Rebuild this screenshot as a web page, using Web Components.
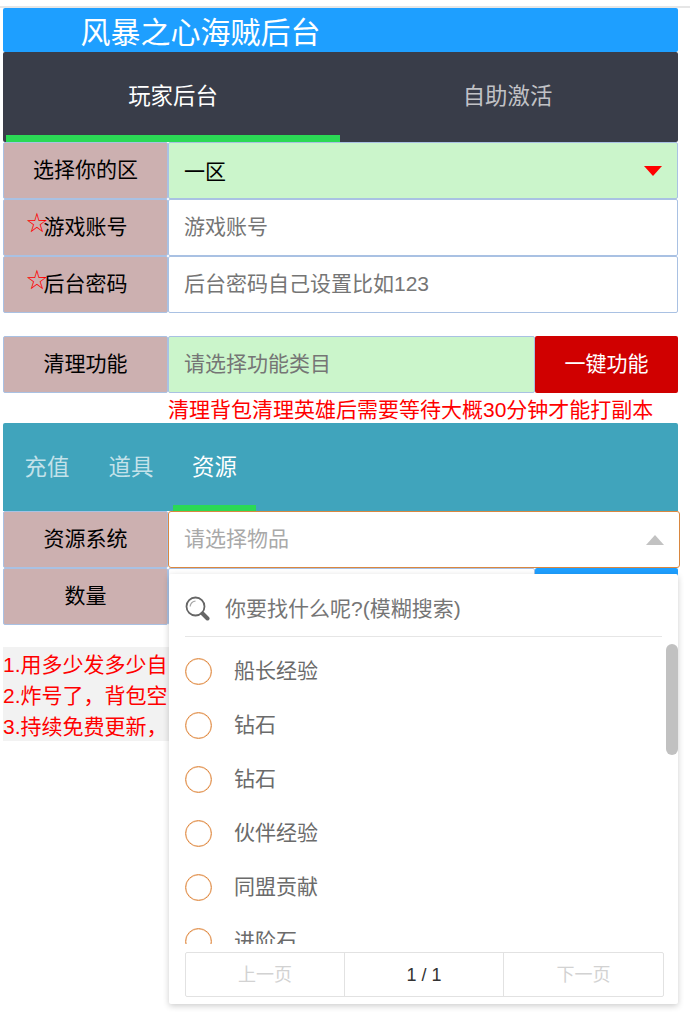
<!DOCTYPE html>
<html lang="zh"><head><meta charset="utf-8"><title>风暴之心海贼后台</title>
<style>
html,body{margin:0;padding:0;background:#fff}
body{font-family:"Liberation Sans","Noto Sans CJK SC",sans-serif;font-size:21px;color:#000}
</style></head><body>
<app-page>
  <page-title>风暴之心海贼后台</page-title>
  <main-tabs></main-tabs>
  <form-row label="选择你的区"><field-box tone="green" value="一区" arrow="down"></field-box></form-row>
  <form-row label="游戏账号" star><field-box placeholder="游戏账号"></field-box></form-row>
  <form-row label="后台密码" star><field-box placeholder="后台密码自己设置比如123"></field-box></form-row>
  <form-row label="清理功能" style="margin-top:23px"><field-box tone="green" placeholder="请选择功能类目"></field-box><action-btn color="#d00000" slot="action">一键功能</action-btn></form-row>
  <red-note>清理背包清理英雄后需要等待大概30分钟才能打副本</red-note>
  <sub-tabs></sub-tabs>
  <select-area>
    <form-row label="资源系统"><field-box open placeholder="请选择物品" arrow="up"></field-box></form-row>
    <form-row label="数量"><field-box></field-box><action-btn color="#1e9fff" slot="action"></action-btn></form-row>
    <drop-panel></drop-panel>
  </select-area>
  <notice-box></notice-box>
</app-page>
<script>
function def(name, css, html, extra){
  customElements.define(name, class extends HTMLElement{
    constructor(){super();const r=this.attachShadow({mode:'open'});r.innerHTML='<style>'+css+'</style>'+(typeof html==='function'?html(this):html);}
    connectedCallback(){if(extra)extra(this)}
  });
}
def('app-page',':host{display:block;padding-top:6px;min-height:1015px;box-sizing:border-box}.line{height:2px;background:#e6e6e6}.wrap{width:675px;margin-left:3px}','<div class="line"></div><div class="wrap"><slot></slot></div>');
def('page-title',':host{display:block;height:44px;background:#1e9fff;border-radius:2px;color:#fff;font-size:30px;line-height:50px;padding-left:77.5px;overflow:hidden}','<slot></slot>');
def('main-tabs',':host{display:grid;grid-template-columns:334px 1fr;height:90px;background:#393d49;border-radius:2px;padding:0 3px;box-sizing:border-box;font-size:22.4px}.t{display:flex;align-items:center;justify-content:center;color:rgba(255,255,255,.7);box-sizing:border-box;padding-bottom:7px}.on{color:#fff;border-bottom:7px solid #2bd955;padding-bottom:0}','<div class="t on">玩家后台</div><div class="t">自助激活</div>');
def('form-row',':host{display:flex;height:57px;box-sizing:border-box}.l{flex:0 0 165px;box-sizing:border-box;height:57px;background:#ccb0b0;border:1px solid #a9c1e3;border-radius:2px;display:flex;align-items:center;justify-content:center;padding-bottom:6px;font-size:21px;color:#000}.s{color:#f00;letter-spacing:-4px;margin-left:-17px;position:relative;top:-4px;white-space:nowrap}.f{flex:1;display:flex;min-width:0}',
 h=>'<div class="l"><span>'+(h.hasAttribute('star')?'<span class="s">☆</span>':'')+h.getAttribute('label')+'</span></div><div class="f"><slot></slot><slot name="action"></slot></div>');
def('field-box',':host{flex:1;display:block;min-width:0}.b{height:57px;box-sizing:border-box;border:1px solid #a9c1e3;border-radius:2px;background:#fff;display:flex;align-items:center;padding:0 15px 5px;font-size:21px;color:#757575;justify-content:space-between;white-space:nowrap}.green{background:#cbf5cb}.open{border-color:#d9873f;width:512px;background:#fff;color:#a9a9a9;border-radius:3px}.v{color:#000;padding-top:3px}.ar{width:0;height:0;border:9px solid transparent}.down{border-top:10px solid #f00;border-bottom:0;margin-top:5px}.up{border-bottom:10px solid #c2c2c2;border-top:0;margin-top:5px}',
 h=>{const v=h.getAttribute('value'),p=h.getAttribute('placeholder')||'',a=h.getAttribute('arrow');
 return '<div class="b '+(h.getAttribute('tone')==='green'?'green ':'')+(h.hasAttribute('open')?'open':'')+'">'+(v?'<span class="v">'+v+'</span>':'<span>'+p+'</span>')+(a?'<span class="ar '+a+'"></span>':'')+'</div>'});
def('action-btn',':host{flex:0 0 143px;display:flex;align-items:center;justify-content:center;border-radius:2px;color:#fff;font-size:21px;height:57px;padding-bottom:5px;box-sizing:border-box}',
 '<slot></slot>', h=>{h.style.background=h.getAttribute('color')});
def('red-note',':host{display:block;height:30px;line-height:33px;margin-left:165px;color:#f00;font-size:21px;white-space:nowrap}','<slot></slot>');
def('sub-tabs',':host{display:flex;height:88px;background:#40a4bc;border-radius:2px 2px 0 0;padding-left:2px;box-sizing:border-box;font-size:22.4px}.t{width:84px;box-sizing:border-box;display:flex;align-items:center;justify-content:center;color:rgba(255,255,255,.7);margin-bottom:6px;padding-top:2px}.on{width:83px;color:#fff;margin-bottom:0;border-bottom:6px solid #2bd955}','<div class="t">充值</div><div class="t">道具</div><div class="t on">资源</div>');
def('select-area',':host{display:block;position:relative;z-index:1}','<slot></slot>');
def('drop-panel',':host{position:absolute;z-index:5;left:166px;top:63px;width:509px;height:430px;background:#fff;border-radius:2px;box-shadow:0 2px 6px rgba(0,0,0,.2);box-sizing:border-box;padding:0 16px;overflow:hidden}'+
 '.s{height:63px;display:flex;align-items:center;border-bottom:1px solid #e6e6e6;width:477px;color:#757575;font-size:21px;gap:15px;padding-top:3px;box-sizing:border-box}'+
 '.list{height:300px;margin-top:7px;overflow:hidden}.i{height:54px;display:flex;align-items:center;gap:22px;color:#6b6b6b;font-size:21px}.i span:last-child{margin-bottom:5px}.c{width:25px;height:25px;border:1px solid #e08a42;box-shadow:inset 0 0 0 .5px rgba(224,138,66,.5);border-radius:50%;flex:none}'+
 '.thumb{position:absolute;right:0;top:70px;width:12px;height:111px;background:#c1c1c1;border-radius:6px}'+
 '.p{display:grid;grid-template-columns:158px 159px 1fr;width:479px;height:45px;margin-top:8px;border:1px solid #e2e2e2;border-radius:2px;box-sizing:border-box;font-size:18px;color:#d2d2d2}.p div{display:flex;align-items:center;justify-content:center;padding-bottom:3px}.p div+div{border-left:1px solid #e2e2e2}.p div.n{color:#333;padding:1px 0 0}',
 '<div class="s"><svg width="25" height="25" viewBox="0 0 25 25" style="flex:none;margin-top:4px"><circle cx="10.5" cy="10.5" r="9" fill="none" stroke="#666" stroke-width="1.8"/><path d="M5.2 10.5a5.3 5.3 0 0 1 5.3-5.3" fill="none" stroke="#aaa" stroke-width="1.3"/><path d="M17.5 17.5l5 5" stroke="#666" stroke-width="4" stroke-linecap="round"/></svg><span>你要找什么呢?(模糊搜索)</span></div>'+
 '<div class="list">'+['船长经验','钻石','钻石','伙伴经验','同盟贡献','进阶石'].map(t=>'<div class="i"><span class="c"></span><span>'+t+'</span></div>').join('')+'</div>'+
 '<div class="thumb"></div><div class="p"><div>上一页</div><div class="n">1 / 1</div><div>下一页</div></div>');
def('notice-box',':host{display:block;margin-top:22px;background:#f2f2f2;color:#f00;font-size:21px;line-height:31px;white-space:nowrap;height:94px;overflow:hidden;padding-top:2px;box-sizing:border-box}','<div>1.用多少发多少自</div><div>2.炸号了，背包空</div><div>3.持续免费更新，</div>');
</script>
</body></html>
